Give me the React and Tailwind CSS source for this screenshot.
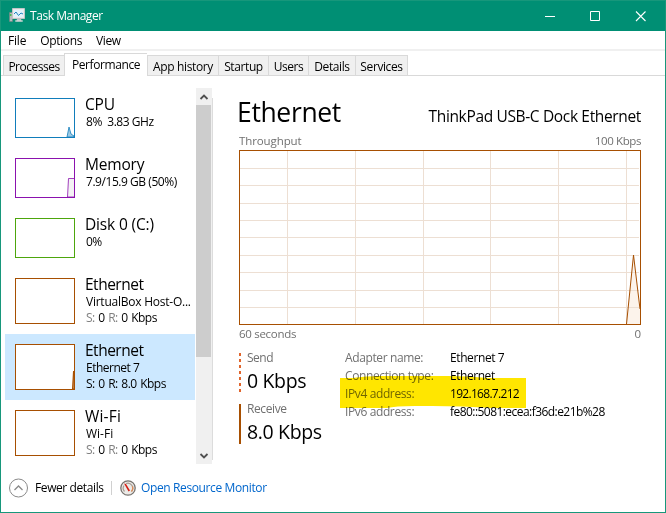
import React from "react";

function ListItem({ color, tall, selected, title, titleTrack, line, lineTrack, rates, children }) {
  return (
    <div className={"flex w-[190px] shrink-0 pl-[10px] pt-[10px] " + (tall ? "h-[66px] " : "h-[60px] ") + (selected ? "bg-[#cce8ff]" : "")}>
      <svg width="60" height={tall ? 46 : 40} className="shrink-0">
        <rect x=".5" y=".5" width="59" height={tall ? 45 : 39} fill="#fff" />
        {children}
        <rect x=".5" y=".5" width="59" height={tall ? 45 : 39} fill="none" stroke={color} />
      </svg>
      <div className="-mt-1 flex flex-col whitespace-nowrap pl-[10px]">
        <span className={"h-5 text-[15.5px] leading-[21px] " + titleTrack}>{title}</span>
        <span className={"h-4 pl-px text-[12px] leading-4 " + lineTrack}>{line}</span>
        {rates && (
          <span className="pl-px text-[12px] leading-4 tracking-[-0.5px] [word-spacing:0.9px]">
            <span className={selected ? "" : "text-[#808080]"}>S:</span> {" "}0{" "}
            <span className={selected ? "" : "text-[#808080]"}>R:</span> {rates}
          </span>
        )}
      </div>
    </div>
  );
}

const tabs = [
  ["Processes", "w-[61px] tracking-[-0.5px]"],
  ["Performance", "w-[83px] tracking-[-0.4px]"],
  ["App history", "w-[71px] tracking-[-0.35px]"],
  ["Startup", "w-[50px] tracking-[-0.4px]"],
  ["Users", "w-[40px] tracking-[-0.5px]"],
  ["Details", "w-[47px] tracking-[-0.4px]"],
  ["Services", "w-[53px] border-r tracking-[-0.4px]"],
];

const gridX = [48, 116, 184, 251, 319, 387];
const gridY = [18, 35, 53, 70, 87, 105, 122, 140, 157];

const details = [
  ["Adapter name:", "Ethernet 7", "tracking-[-0.4px]"],
  ["Connection type:", "Ethernet", "tracking-[-0.45px]"],
  ["IPv4 address:", "192.168.7.212", "tracking-[-0.7px]"],
  ["IPv6 address:", "fe80::5081:ecea:f36d:e21b%28", "tracking-[-0.55px]"],
];

export default function App() {
  return (
    <div className="flex h-[513px] w-[666px] flex-col overflow-hidden border border-[#17977b] bg-white font-['Open_Sans','Noto_Sans',sans-serif] text-[12px] text-black">
      <header className="flex h-[30px] shrink-0 items-center bg-[#008f74] pl-2 text-white">
        <svg width="16" height="16" viewBox="0 0 16 16">
          <path d="M.5 4.500h3v9h-3z" fill="#b5bcbf" stroke="#77827f" strokeWidth=".6" />
          <path d="M1 6h1.500v2H1z" fill="#4dbb52" />
          <path d="M3.500.5h12v10h-12z" fill="#e8eaeb" stroke="#c0c5c8" />
          <path d="M5 2h9v7H5z" fill="#e1f3fc" />
          <path d="M5 6l2-2 2.500 3.500L12 5l2 1" fill="none" stroke="#2085bf" />
          <path d="M8 11h4l1 2.500H7z" fill="#bdc3c6" />
          <path d="M6 13h8" stroke="#dce0e1" />
        </svg>
        <span className="pl-[5px] tracking-[-0.45px]">Task Manager</span>
        <svg width="110" height="12" viewBox="0 0 110 12" className="ml-auto mr-[14px]" fill="none" stroke="#fff">
          <path d="M4 6.500h10" />
          <path d="M49.500 1.500h9v9h-9z" />
          <path d="M95 1.500l9.500 9.500M104.500 1.500L95 11" strokeWidth="1.100" />
        </svg>
      </header>
      <nav className="flex h-5 shrink-0 gap-[14px] border-b-2 border-[#f0f0f0] pl-[7px] leading-[20px]">
        <span className="tracking-[-0.2px]">File</span>
        <span className="tracking-[-0.35px]">Options</span>
        <span className="tracking-[-0.4px]">View</span>
      </nav>
      <div className="flex h-[25px] shrink-0 items-end">
        <div className="h-full w-[2px] border-b border-[#d9d9d9]" />
        {tabs.map(([name, cls]) => (
          <div
            key={name}
            className={
              "flex shrink-0 justify-center whitespace-nowrap border-l border-t border-[#d9d9d9] " +
              (name === "Performance" ? "h-[23px] bg-white leading-[21px] " : "h-[21px] border-b bg-[#f0f0f0] leading-[22px] ") +
              cls
            }
          >
            {name}
          </div>
        ))}
        <div className="h-full flex-1 border-b border-[#d9d9d9]" />
      </div>

      <main className="flex h-[388px] shrink-0 pl-1 pt-3">
        <div className="flex h-[376px] w-[191px] flex-col overflow-hidden">
          <ListItem color="#117dbb" title="CPU" titleTrack="tracking-[-0.2px]" line={<>8%&nbsp; 3.83 GHz</>} lineTrack="tracking-[-0.45px]">
            <path d="M52 39l2-10 2 7 3 2v1z" fill="#9cc9e4" stroke="#117dbb" strokeWidth=".8" />
          </ListItem>
          <ListItem color="#8b12ae" title="Memory" titleTrack="tracking-[-0.2px]" line="7.9/15.9 GB (50%)" lineTrack="tracking-[-0.45px]">
            <path d="M52.500 39l1-18.500H60V39z" fill="#f4f2f4" stroke="#8b12ae" strokeWidth=".8" />
          </ListItem>
          <ListItem color="#4da60c" title="Disk 0 (C:)" titleTrack="tracking-[-0.15px]" line="0%" lineTrack="tracking-[-0.6px]" />
          <ListItem tall color="#a74f01" title="Ethernet" titleTrack="tracking-[-0.5px]" line="VirtualBox Host-O..." lineTrack="tracking-[-0.24px]" rates="0 Kbps" />
          <ListItem tall selected color="#a74f01" title="Ethernet" titleTrack="tracking-[-0.5px]" line="Ethernet 7" lineTrack="tracking-[-0.5px]" rates="8.0 Kbps">
            <path d="M57.500 45l1-18 .5 18z" fill="#e6c5a5" stroke="#a74f01" />
          </ListItem>
          <ListItem tall color="#a74f01" title="Wi-Fi" titleTrack="tracking-[0.2px]" line="Wi-Fi" lineTrack="tracking-[0px]" rates="0 Kbps" />
        </div>
        <div className="flex h-[376px] w-4 flex-col items-center bg-[#f0f0f0]">
          <svg width="16" height="17" viewBox="0 0 16 17" fill="none" stroke="#505050" strokeWidth="1.800">
            <path d="M4.500 11L8 7.500l3.500 3.500" />
          </svg>
          <div className="h-[252px] w-[15px] self-start bg-[#cdcdcd]" />
          <svg width="16" height="17" viewBox="0 0 16 17" className="mt-auto" fill="none" stroke="#505050" strokeWidth="1.800">
            <path d="M4.500 7L8 10.500 11.500 7" />
          </svg>
        </div>
        <div className="mt-[10px] h-[362px] w-px bg-[#dcdcdc]" />

        <section className="ml-[26px] flex w-[402px] flex-col">
          <div className="flex h-[46px] items-baseline justify-between whitespace-nowrap">
            <h1 className="-ml-[2px] text-[26.5px] leading-[48px] tracking-[-0.35px]">Ethernet</h1>
            <h2 className="text-[15.5px] tracking-[-0.35px]">ThinkPad USB-C Dock Ethernet</h2>
          </div>
          <div className="flex h-4 justify-between text-[11.5px] leading-[14px] text-[#707070]">
            <span className="tracking-[-0.1px]">Throughput</span>
            <span className="tracking-[-0.4px]">100 Kbps</span>
          </div>
          <svg width="402" height="175" className="shrink-0" shapeRendering="crispEdges">
            {gridX.map((x) => (
              <path key={x} d={`M${x + 0.5} 0v175`} stroke="#eddfd3" />
            ))}
            {gridY.map((y) => (
              <path key={y} d={`M0 ${y + 0.5}h400`} stroke="#eddfd3" />
            ))}
            <path d="M387.500 174l7-69 6.500 54v15z" fill="#fcf3eb" />
            {gridY.slice(6).map((y) => (
              <path key={y} d={`M${387 + (174 - y) / 10} ${y + 0.5}H400`} stroke="#eddfd3" />
            ))}
            <path d="M387.500 174l7-69 6.500 54" fill="none" stroke="#a74f01" shapeRendering="auto" />
            <rect x=".5" y=".5" width="401" height="174" fill="none" stroke="#a74f01" />
          </svg>
          <div className="flex h-[26px] justify-between text-[11.5px] leading-[18px] text-[#707070]">
            <span className="tracking-[-0.3px]">60 seconds</span>
            <span>0</span>
          </div>
          <div className="flex">
            <div className="flex w-[106px] shrink-0 flex-col gap-[11px] pt-[2px]">
              <div className="flex h-10">
                <svg width="2" height="40">
                  <path d="M1 0v40" stroke="#e0652c" strokeWidth="2" strokeDasharray="3 3" />
                </svg>
                <div className="pl-[6px]">
                  <div className="h-[15px] leading-[10px] tracking-[-0.5px] text-[#707070]">Send</div>
                  <div className="whitespace-nowrap text-[19.5px] leading-[26px] tracking-[-0.35px]">0 Kbps</div>
                </div>
              </div>
              <div className="flex h-10">
                <div className="w-[2px] bg-[#a74f01]" />
                <div className="pl-[6px]">
                  <div className="h-[15px] leading-[10px] tracking-[-0.4px] text-[#707070]">Receive</div>
                  <div className="whitespace-nowrap text-[19.5px] leading-[26px] tracking-[-0.35px]">8.0 Kbps</div>
                </div>
              </div>
            </div>
            <div className="relative -mt-px">
              {details.map(([label, value, track]) => (
                <div key={label} className="flex h-[18px] whitespace-nowrap leading-[16px]">
                  <span className="w-[105px] tracking-[-0.38px] text-[#707070]">{label}</span>
                  <span className={track}>{value}</span>
                </div>
              ))}
              <svg width="186" height="32" className="absolute left-[-5px] top-[26px] mix-blend-multiply">
                <path d="M0 2h12q14-2 28-2h68q20 0 40 2h38v30h-34q-30-2-60-2H75q-20 0-28 2H0z" fill="#ffe600" />
              </svg>
            </div>
          </div>
        </section>
      </main>

      <footer className="flex h-[47px] items-center pl-2">
        <svg width="20" height="20" viewBox="0 0 20 20" fill="none" stroke="#8a8a8a">
          <circle cx="9.500" cy="10" r="9" />
          <path d="M5.500 12l4-4 4 4" strokeWidth="1.300" />
        </svg>
        <span className="w-[75px] whitespace-nowrap pl-[6px] tracking-[-0.4px]">Fewer details</span>
        <div className="ml-[7px] h-[14px] w-px bg-[#d0d0d0]" />
        <svg width="16" height="16" viewBox="0 0 16 16" className="ml-2">
          <circle cx="8" cy="8" r="7.200" fill="#eceae7" stroke="#77736f" strokeWidth="1.300" />
          <path d="M4.500 11.500A5 5 0 0 1 4 5.500M6 3.500a5 5 0 0 1 5.500 8" fill="none" stroke="#a79d94" strokeWidth="1.200" />
          <path d="M12.500 6.500a5 5 0 0 1-1 5" fill="none" stroke="#e28b54" strokeWidth="1.300" />
          <path d="M4 3.500l2 .5 4 6.500-1.500 1z" fill="#d51c12" />
        </svg>
        <span className="pl-[5px] tracking-[-0.38px] text-[#0066cc]">Open Resource Monitor</span>
      </footer>
    </div>
  );
}
